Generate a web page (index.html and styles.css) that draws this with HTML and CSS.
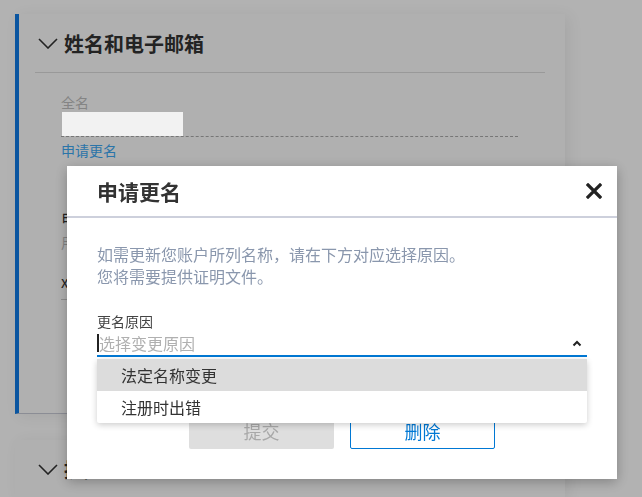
FILE: index.html
```html
<!DOCTYPE html>
<html lang="zh-CN">
<head>
    <meta charset="UTF-8">
    <meta name="viewport" content="width=device-width, initial-scale=1.0">
    <title>账户设置</title>
    <link rel="stylesheet" href="styles.css">
</head>
<body>
    <div class="page">
        <section class="card card-open">
            <div class="card-header">
                <svg class="chevron" width="20" height="11" viewBox="0 0 20 11"><polyline points="1,1 10,10 19,1" fill="none" stroke="#333" stroke-width="1.6"/></svg>
                <h2>姓名和电子邮箱</h2>
            </div>
            <div class="card-body">
                <div class="field">
                    <div class="field-label">全名</div>
                    <div class="field-input"><span class="masked"></span></div>
                    <a href="#" class="field-link">申请更名</a>
                </div>
                <div class="field field-email">
                    <div class="field-title">电子邮箱</div>
                    <div class="field-hint">用户</div>
                    <div class="field-value">x</div>
                </div>
            </div>
        </section>

        <section class="card">
            <div class="card-header">
                <svg class="chevron" width="20" height="11" viewBox="0 0 20 11"><polyline points="1,1 10,10 19,1" fill="none" stroke="#333" stroke-width="1.6"/></svg>
                <h2>提醒</h2>
            </div>
        </section>
    </div>

    <!-- Rename dialog -->
    <div class="overlay">
        <div class="dialog">
            <div class="dialog-header">
                <h3>申请更名</h3>
                <button class="close-btn" aria-label="关闭">
                    <svg width="16" height="16" viewBox="0 0 16 16"><path d="M2 2 L14 14 M14 2 L2 14" stroke="#222" stroke-width="3.2" stroke-linecap="square"/></svg>
                </button>
            </div>
            <div class="dialog-body">
                <p class="dialog-text">如需更新您账户所列名称，请在下方对应选择原因。<br>您将需要提供证明文件。</p>

                <label class="select-label">更名原因</label>
                <div class="select">
                    <div class="select-box">
                        <span class="caret"></span>
                        <span class="placeholder">选择变更原因</span>
                        <svg class="select-arrow" width="10" height="7" viewBox="0 0 10 7"><polyline points="1.5,5.5 5,2 8.5,5.5" fill="none" stroke="#222" stroke-width="2"/></svg>
                    </div>
                    <ul class="options">
                        <li class="option active">法定名称变更</li>
                        <li class="option">注册时出错</li>
                    </ul>
                </div>

                <div class="dialog-buttons">
                    <button class="submit-btn" disabled>提交</button>
                    <button class="delete-btn">删除</button>
                </div>
            </div>
        </div>
    </div>
</body>
</html>
```

FILE: styles.css
```css
body {
    margin: 0;
    font-family: "Noto Sans CJK SC", "Noto Sans", sans-serif;
    background-color: #ffffff;
    color: #333;
}

.page {
    padding: 14px 0 40px 15px;
}

.card {
    width: 550px;
    background-color: #fdfdfd;
    box-shadow: 4px 2px 14px rgba(0, 0, 0, 0.07);
    margin-bottom: 26px;
}

.card-open {
    border-left: 4px solid #0f7ae5;
    width: 546px;
    border-bottom: 1px solid #c8cad6;
    height: 399px;
}

.card-header {
    display: flex;
    align-items: center;
    gap: 6px;
    height: 58px;
    padding-left: 23px;
    margin-right: 20px;
}

.card-open .card-header {
    margin-left: 16px;
    padding-left: 3px;
    border-bottom: 1px solid #dcdcdc;
}

.chevron {
    flex-shrink: 0;
    margin-top: 1px;
}

.card-header h2 {
    margin: 0;
    font-size: 20px;
    font-weight: bold;
    color: #333;
}

.card-body {
    padding: 20px 47px 0 42px;
}

.field-label {
    font-size: 14px;
    line-height: 18px;
    color: #bdbdbd;
}

.field-input {
    height: 24px;
    border-bottom: 1px dashed #aaa;
    margin-top: 1px;
}

.masked {
    position: relative;
    z-index: 20;
    display: block;
    width: 121px;
    height: 24px;
    margin-left: 1px;
    background-color: #f2f2f2;
}

.field-link {
    display: inline-block;
    margin-top: 3px;
    font-size: 14px;
    line-height: 18px;
    color: #3ea8f2;
    text-decoration: none;
}

.field-email {
    margin-top: 46px;
    border-bottom: 1px solid #cccccc;
    padding-bottom: 6px;
}

.field-title {
    font-size: 16px;
    line-height: 22px;
    color: #333;
}

.field-hint {
    margin-top: 4px;
    font-size: 14px;
    line-height: 18px;
    color: #bbb;
}

.field-value {
    margin-top: 20px;
    font-size: 15px;
    line-height: 22px;
    color: #333;
}

/* Dialog */

.overlay {
    position: fixed;
    top: 0;
    left: 0;
    right: 0;
    bottom: 0;
    background-color: rgba(0, 0, 0, 0.3);
    z-index: 10;
    display: flex;
    align-items: flex-start;
    padding: 166px 0 0 67px;
}

.dialog {
    width: 550px;
    background-color: white;
    box-shadow: 0 3px 12px rgba(0, 0, 0, 0.28);
    position: relative;
    z-index: 30;
}

.dialog-header {
    display: flex;
    align-items: center;
    justify-content: space-between;
    height: 50px;
    padding: 0 15px 0 30px;
    border-bottom: 2px solid #cdd0dc;
}

.dialog-header h3 {
    margin: 0;
    font-size: 21px;
    font-weight: bold;
    color: #333;
}

.close-btn {
    border: none;
    background: none;
    padding: 0;
    width: 16px;
    height: 16px;
    cursor: pointer;
}

.dialog-body {
    padding: 25px 30px 30px 30px;
}

.dialog-text {
    margin: 0;
    font-size: 16px;
    line-height: 22px;
    color: #8a97ad;
}

.select-label {
    display: block;
    margin-top: 25px;
    font-size: 14px;
    line-height: 18px;
    color: #444;
}

.select {
    position: relative;
}

.select-box {
    display: flex;
    align-items: center;
    height: 25px;
    border-bottom: 2px solid #0078d4;
    padding-right: 5px;
}

.caret {
    width: 2px;
    height: 18px;
    background-color: #222;
}

.placeholder {
    flex: 1;
    font-size: 16px;
    line-height: 22px;
    color: #b0b0b0;
}

.select-arrow {
    margin-top: 2px;
}

.options {
    position: absolute;
    top: calc(100% + 2px);
    left: 0;
    right: 0;
    margin: 0;
    padding: 0;
    list-style: none;
    background-color: white;
    box-shadow: 0 2px 6px rgba(0, 0, 0, 0.2);
    border-radius: 2px;
    z-index: 5;
}

.option {
    height: 32px;
    line-height: 32px;
    padding-left: 24px;
    font-size: 16px;
    color: #333;
}

.option.active {
    background-color: #dcdcdc;
}

.dialog-buttons {
    display: flex;
    justify-content: center;
    gap: 16px;
    margin-top: 56px;
}

.dialog-buttons button {
    width: 145px;
    height: 36px;
    font-family: inherit;
    font-size: 18px;
    border-radius: 2px;
}

.submit-btn {
    background-color: #dedede;
    color: #a8a8a8;
    border: none;
}

.delete-btn {
    background-color: white;
    color: #0078d4;
    border: 1px solid #0078d4;
    cursor: pointer;
}
```
